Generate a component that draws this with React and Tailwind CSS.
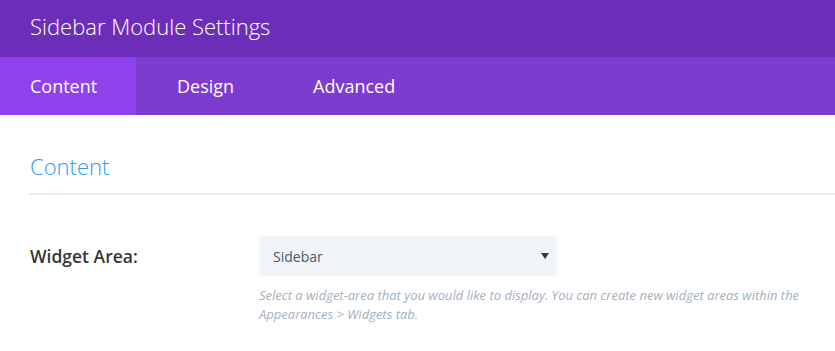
export default function App() {
  return (
    <div className="w-[835px] h-[351px] bg-white overflow-hidden" style={{ fontFamily: '"Open Sans", sans-serif' }}>
      <div className="h-[57px] bg-[#6c2eb9] flex items-center pl-[30px] pb-[6px]">
        <span className="text-white text-[22px] font-light leading-[30px]">Sidebar Module Settings</span>
      </div>
      <div className="h-[58px] bg-[#7e3bd0] flex text-white text-[18px] font-medium">
        <div className="w-[136px] bg-[#8f42ec] flex items-center pl-[30px]">Content</div>
        <div className="w-[137px] flex items-center pl-[41px]">Design</div>
        <div className="flex items-center pl-[40px]">Advanced</div>
      </div>
      <div className="pl-[29px]">
        <div className="pt-[36px] pb-[12px] pl-[1px] text-[22px] font-light text-[#2b9cf2] leading-[30px]">Content</div>
        <div className="h-[2px] bg-[#eaedf0]" />
        <div className="flex mt-[41px]">
          <div className="w-[230px] pl-[1px] pt-[8px] text-[17.5px] font-semibold text-[#32373c] leading-[24px]">Widget Area:</div>
          <div className="w-[560px]">
            <div className="w-[298px] h-[40px] bg-[#f1f5f9] rounded-[3px] flex items-center justify-between pl-[14px] pr-[6px] text-[14px] text-[#4c5866]">
              <span>Sidebar</span>
              <svg width="12" height="12" viewBox="0 0 12 12"><path d="M2 3 L10 3 L6 9 Z" fill="#32373c" /></svg>
            </div>
            <p className="mt-[10px] text-[13px] italic text-[#a3b0c2] leading-[19px]">
              Select a widget-area that you would like to display. You can create new widget areas within the Appearances &gt; Widgets tab.
            </p>
          </div>
        </div>
      </div>
    </div>
  );
}
